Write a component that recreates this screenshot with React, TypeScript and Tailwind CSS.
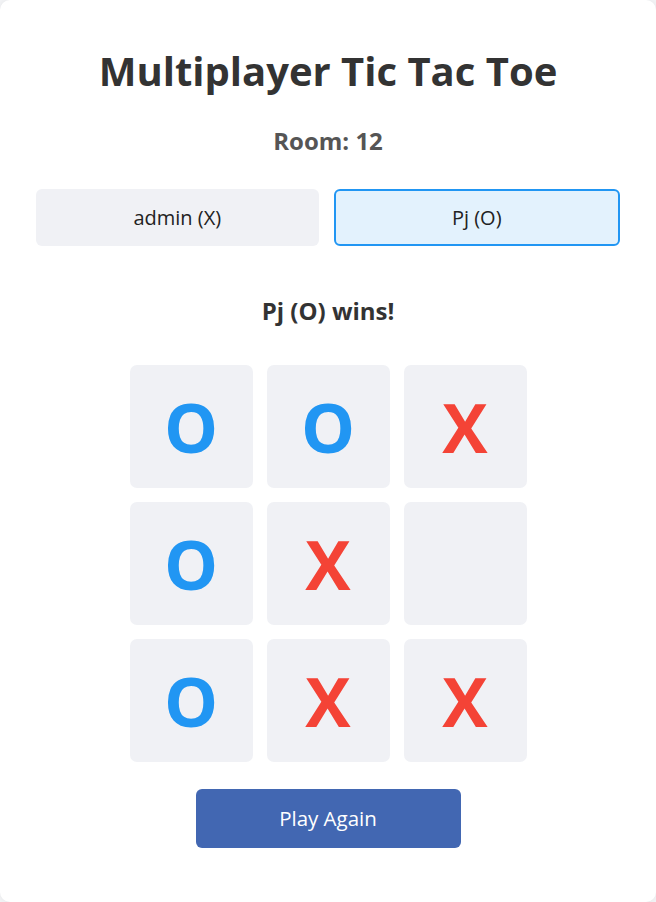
const board = ['O', 'O', 'X', 'O', 'X', '', 'O', 'X', 'X']

const players = [
  { name: 'admin (X)', active: false },
  { name: 'Pj (O)', active: true },
]

export default function App() {
  return (
    <div className="min-h-screen bg-[#f3f4f6] font-['Segoe_UI','Open_Sans',sans-serif]">
      <div className="flex h-[902px] w-[656px] flex-col items-center rounded-[10px] bg-white pt-[47px] shadow-[0_0_6px_rgba(0,0,0,0.06)]">
        <h1 className="h-[48px] text-[40px] font-bold leading-[48px] text-[#333]">Multiplayer Tic Tac Toe</h1>
        <h3 className="mt-[30px] h-[32px] text-[24px] font-bold leading-[32px] text-[#555]">Room: 12</h3>

        <div className="mt-[32px] flex w-full gap-[15px] px-[36px]">
          {players.map((p) => (
            <div
              key={p.name}
              className={`flex h-[57px] flex-1 items-center justify-center rounded-[6px] text-[20px] text-[#222] ${
                p.active ? 'border-2 border-[#2196f3] bg-[#e3f2fd]' : 'bg-[#f0f1f5]'
              }`}
            >
              {p.name}
            </div>
          ))}
        </div>

        <div className="mt-[49px] h-[32px] text-[24px] font-bold leading-[32px] text-[#333]">Pj (O) wins!</div>

        <div className="mt-[38px] grid grid-cols-[repeat(3,123px)] gap-[14px]">
          {board.map((v, i) => (
            <div
              key={i}
              className={`flex h-[123px] items-center justify-center rounded-[7px] bg-[#f0f1f5] text-[68px] font-bold ${
                v === 'O' ? 'text-[#2196f3]' : 'text-[#f44336]'
              }`}
            >
              {v}
            </div>
          ))}
        </div>

        <button className="mt-[27px] h-[59px] w-[265px] rounded-[6px] bg-[#4267b2] text-[20.5px] text-white">
          Play Again
        </button>
      </div>
    </div>
  )
}
